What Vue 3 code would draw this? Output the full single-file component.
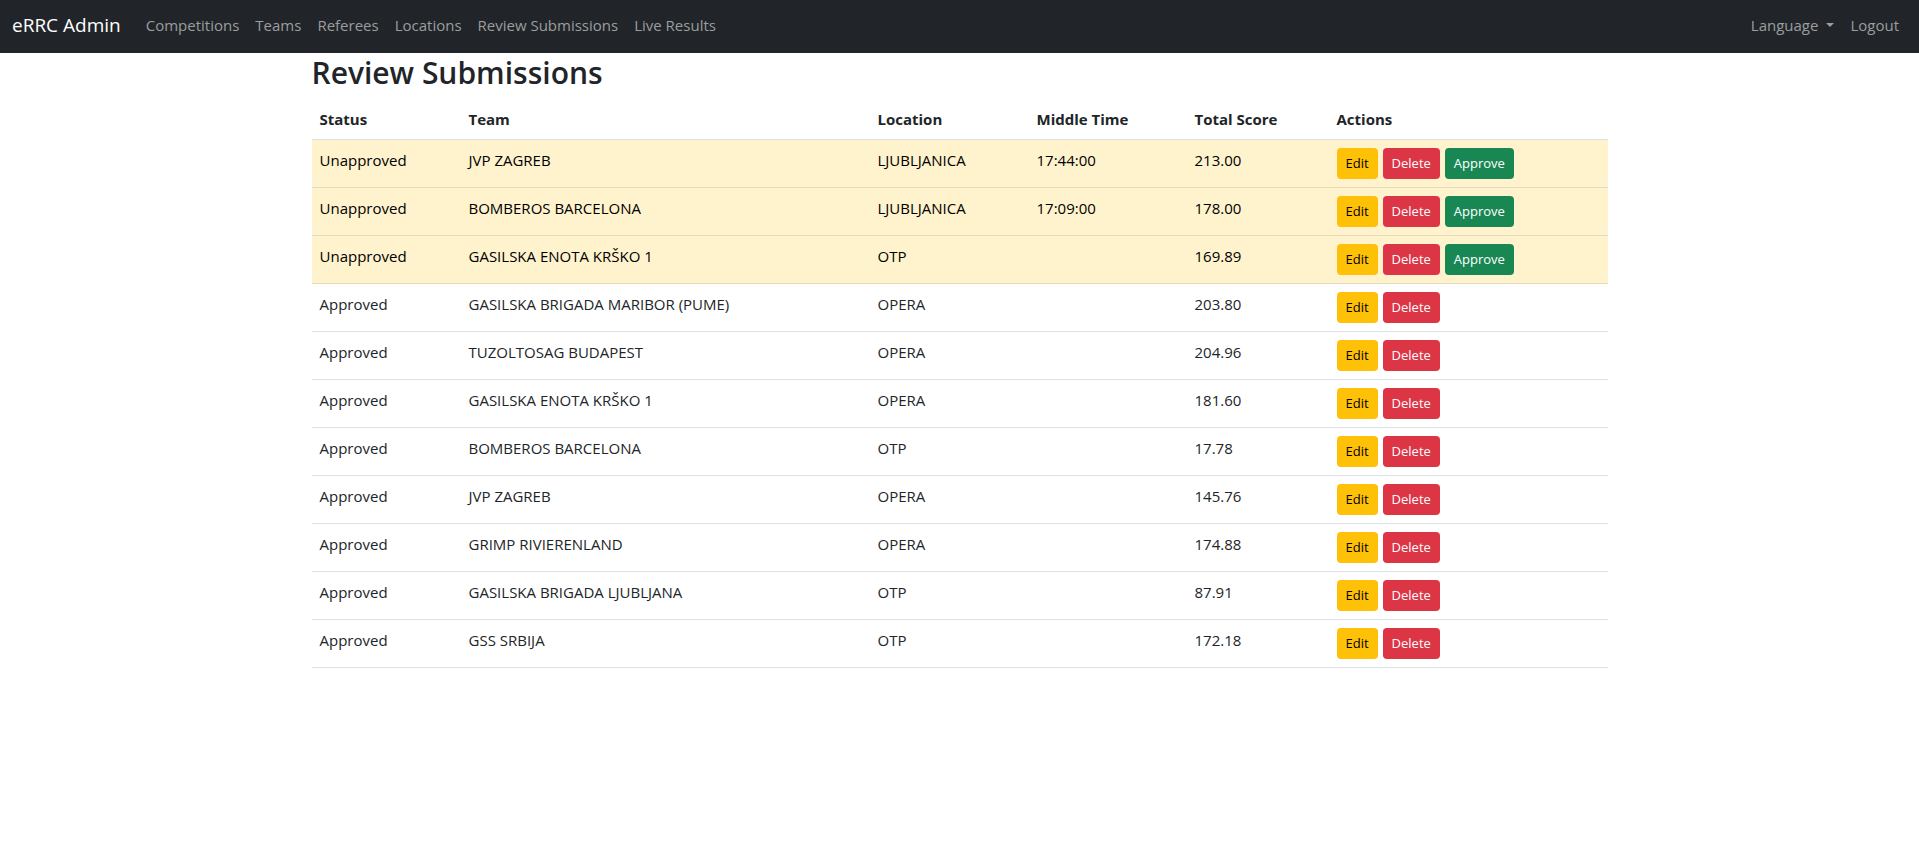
<script setup>
const links = ['Competitions', 'Teams', 'Referees', 'Locations', 'Review Submissions', 'Live Results']

const columns = [
  { label: 'Status', key: 'status' },
  { label: 'Team', key: 'team' },
  { label: 'Location', key: 'location' },
  { label: 'Middle Time', key: 'time' },
  { label: 'Total Score', key: 'score' },
  { label: 'Actions', key: 'actions' },
]

const submissions = [
  { team: 'JVP ZAGREB', location: 'LJUBLJANICA', time: '17:44:00', score: '213.00', approved: false },
  { team: 'BOMBEROS BARCELONA', location: 'LJUBLJANICA', time: '17:09:00', score: '178.00', approved: false },
  { team: 'GASILSKA ENOTA KRŠKO 1', location: 'OTP', time: '', score: '169.89', approved: false },
  { team: 'GASILSKA BRIGADA MARIBOR (PUME)', location: 'OPERA', time: '', score: '203.80', approved: true },
  { team: 'TUZOLTOSAG BUDAPEST', location: 'OPERA', time: '', score: '204.96', approved: true },
  { team: 'GASILSKA ENOTA KRŠKO 1', location: 'OPERA', time: '', score: '181.60', approved: true },
  { team: 'BOMBEROS BARCELONA', location: 'OTP', time: '', score: '17.78', approved: true },
  { team: 'JVP ZAGREB', location: 'OPERA', time: '', score: '145.76', approved: true },
  { team: 'GRIMP RIVIERENLAND', location: 'OPERA', time: '', score: '174.88', approved: true },
  { team: 'GASILSKA BRIGADA LJUBLJANA', location: 'OTP', time: '', score: '87.91', approved: true },
  { team: 'GSS SRBIJA', location: 'OTP', time: '', score: '172.18', approved: true },
]
</script>

<template>
  <div class="page">
    <nav class="navbar">
      <a class="brand" href="#">eRRC Admin</a>
      <div class="nav-links">
        <a v-for="link in links" :key="link" class="nav-link" href="#">{{ link }}</a>
      </div>
      <div class="nav-links nav-end">
        <button type="button" class="nav-link dropdown" aria-haspopup="true">Language</button>
        <a class="nav-link" href="#">Logout</a>
      </div>
    </nav>

    <main class="container">
      <h2 class="title">Review Submissions</h2>
      <table class="table">
        <colgroup>
          <col v-for="column in columns" :key="column.key" :class="'col-' + column.key" />
        </colgroup>
        <thead>
          <tr>
            <th v-for="column in columns" :key="column.key" scope="col">{{ column.label }}</th>
          </tr>
        </thead>
        <tbody>
          <tr v-for="(row, index) in submissions" :key="index" :class="{ pending: !row.approved }">
            <td>{{ row.approved ? 'Approved' : 'Unapproved' }}</td>
            <td>{{ row.team }}</td>
            <td>{{ row.location }}</td>
            <td>{{ row.time }}</td>
            <td>{{ row.score }}</td>
            <td>
              <div class="actions">
                <button type="button" class="btn btn-edit">Edit</button>
                <button type="button" class="btn btn-delete">Delete</button>
                <button v-if="!row.approved" type="button" class="btn btn-approve">Approve</button>
              </div>
            </td>
          </tr>
        </tbody>
      </table>
    </main>
  </div>
</template>

<style>
body {
  margin: 0;
  background: #fff;
}
</style>

<style scoped>
.page {
  color: #212529;
  font-family: 'Segoe UI', 'Open Sans', 'Noto Sans', sans-serif;
  font-size: 15px;
  line-height: 24px;
}

.page *,
.page *::after {
  box-sizing: border-box;
}

.navbar {
  display: flex;
  align-items: center;
  padding: 5px 12px 8px;
  background: #212529;
}

.brand {
  margin-right: 17px;
  padding: 5px 0;
  color: #fff;
  font-size: 19px;
  line-height: 30px;
  text-decoration: none;
}

.nav-links {
  display: flex;
}

.nav-end {
  margin-left: auto;
}

.nav-link {
  padding: 8px;
  border: 0;
  background: none;
  color: #9b9d9e;
  font: inherit;
  text-decoration: none;
  white-space: nowrap;
}

.dropdown {
  display: flex;
  align-items: center;
  gap: 8px;
}

.dropdown::after {
  content: '';
  border-top: 4px solid;
  border-right: 4px solid transparent;
  border-left: 4px solid transparent;
}

.container {
  max-width: 1320px;
  margin: 0 auto;
  padding: 0 12px;
  box-sizing: border-box;
}

.title {
  margin: 0 0 6px;
  font-size: 30px;
  font-weight: 600;
  line-height: 40px;
}

.table {
  width: 100%;
  border-collapse: separate;
  border-spacing: 0;
  table-layout: fixed;
}

.col-status {
  width: 149px;
}

.col-team {
  width: 409px;
}

.col-location {
  width: 159px;
}

.col-time {
  width: 158px;
}

.col-score {
  width: 142px;
}

.table th,
.table td {
  padding: 8px;
  border-bottom: 1px solid #dee2e6;
  text-align: left;
  vertical-align: top;
}

.table th {
  font-weight: 700;
}

.pending td {
  border-bottom-color: #e6dbb9;
  background: #fff3cd;
  color: #000;
}

.actions {
  display: flex;
  gap: 5px;
}

.btn {
  padding: 4px 8px;
  border: 1px solid transparent;
  border-radius: 4px;
  color: #fff;
  font-family: inherit;
  font-size: 13px;
  line-height: 21px;
}

.btn-edit {
  background: #ffc107;
  color: #000;
}

.btn-delete {
  background: #dc3545;
}

.btn-approve {
  background: #198754;
}
</style>
